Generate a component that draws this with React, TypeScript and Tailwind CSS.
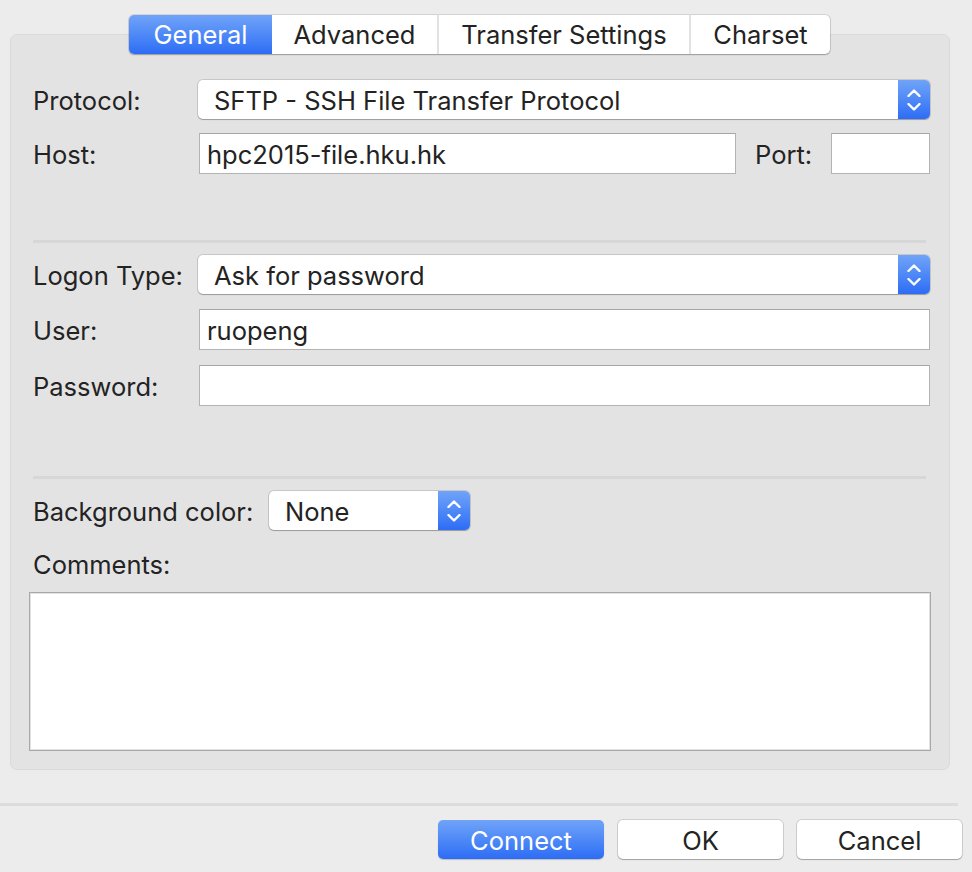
const font = { fontFamily: "Inter, 'Liberation Sans', sans-serif" };

const Stepper = () => (
  <div className="flex h-full w-[32px] flex-col items-center justify-center gap-[6px] rounded-r-[5px] bg-linear-to-b from-[#70a3f8] to-[#2d6cf5]">
    <svg width="14" height="8" viewBox="0 0 14 8" fill="none">
      <path d="M1.5 7 L7 1.5 L12.5 7" stroke="white" strokeWidth="2.4" strokeLinecap="round" strokeLinejoin="round" />
    </svg>
    <svg width="14" height="8" viewBox="0 0 14 8" fill="none">
      <path d="M1.5 1 L7 6.5 L12.5 1" stroke="white" strokeWidth="2.4" strokeLinecap="round" strokeLinejoin="round" />
    </svg>
  </div>
);

const Select = ({ value, className }: { value: string; className: string }) => (
  <div
    className={`flex h-[39px] items-stretch rounded-[5px] bg-white shadow-[0_0_0_1px_rgba(0,0,0,0.12),0_1px_1px_rgba(0,0,0,0.22)] ${className}`}
  >
    <div className="flex flex-1 items-center pt-[3px] pl-[16px] text-[25.5px] text-[#232323]">{value}</div>
    <Stepper />
  </div>
);

const Input = ({ value, className }: { value?: string; className: string }) => (
  <div
    className={`flex h-[41px] items-center border border-[#b3b3b3] border-t-[#a6a6a6] bg-white pt-[3px] pl-[7px] text-[25.5px] text-[#232323] ${className}`}
  >
    {value}
  </div>
);

const Label = ({ children, className = "w-[165px]" }: { children: string; className?: string }) => (
  <div className={`shrink-0 pt-[3px] text-[25.5px] leading-[32px] text-[#232323] ${className}`}>{children}</div>
);

const Separator = () => <div className="mr-[4px] h-[3px] bg-[#d7d7d7]" />;

export default function App() {
  const tabs = [
    { name: "General", w: "w-[143px]" },
    { name: "Advanced", w: "w-[165px]" },
    { name: "Transfer Settings", w: "w-[252px]" },
    { name: "Charset", w: "w-[141px]" },
  ];

  return (
    <div className="flex h-[872px] w-[972px] flex-col overflow-hidden bg-[#ececec]" style={font}>
      {/* tabs */}
      <div className="relative z-10 mt-[15px] ml-[129px] flex h-[39px] w-[701px] rounded-[5px] bg-white shadow-[0_0_0_1px_rgba(0,0,0,0.1),0_1px_1.5px_rgba(0,0,0,0.25)]">
        {tabs.map((t, i) => (
          <div
            key={t.name}
            className={`flex items-center justify-center pt-[2px] text-[25.5px] ${t.w} ${
              i === 0
                ? "rounded-l-[5px] bg-linear-to-b from-[#70a3f8] to-[#2d6cf5] text-white"
                : "text-[#232323]"
            } ${i > 1 ? "border-l-2 border-[#e2e2e2]" : ""}`}
          >
            {t.name}
          </div>
        ))}
      </div>

      {/* panel */}
      <div className="mx-[10px] -mt-[20px] flex h-[736px] w-[940px] flex-col rounded-[7px] border border-[#dadada] bg-[#e3e3e3] pt-[45px] pr-[19px] pl-[22px]">
        <div className="flex items-center">
          <Label>Protocol:</Label>
          <Select value="SFTP - SSH File Transfer Protocol" className="w-[732px]" />
        </div>
        <div className="mt-[14px] flex items-center">
          <Label>Host:</Label>
          <Input value="hpc2015-file.hku.hk" className="ml-[1px] w-[537px]" />
          <Label className="ml-[19px] w-[76px]">Port:</Label>
          <Input className="w-[99px]" />
        </div>

        <div className="mt-[66px]">
          <Separator />
        </div>

        <div className="mt-[12px] flex items-center">
          <Label>Logon Type:</Label>
          <Select value="Ask for password" className="w-[732px]" />
        </div>
        <div className="mt-[15px] flex items-center">
          <Label>User:</Label>
          <Input value="ruopeng" className="ml-[1px] w-[731px]" />
        </div>
        <div className="mt-[15px] flex items-center">
          <Label>Password:</Label>
          <Input className="ml-[1px] w-[731px]" />
        </div>

        <div className="mt-[70px]">
          <Separator />
        </div>

        <div className="mt-[12px] flex items-center">
          <Label className="w-[236px]">Background color:</Label>
          <Select value="None" className="w-[201px]" />
        </div>
        <div className="mt-[16px] h-[30px]">
          <Label>Comments:</Label>
        </div>
        <div className="mt-[16px] -ml-[4px] h-[159px] w-[902px] border border-[#a8a8a8] bg-white shadow-[inset_0_0_0_1px_#e2e2e2]" />
      </div>

      {/* bottom */}
      <div className="mt-[33px] h-[3px] w-[958px] bg-[#dcdcdc]" />
      <div className="mt-[14px] flex justify-end gap-[14px] pr-[10px]">
        <button className="h-[39px] w-[166px] rounded-[5px] bg-linear-to-b from-[#70a3f8] to-[#2d6cf5] pt-[2px] text-[25.5px] text-white shadow-[0_1px_1px_rgba(0,0,0,0.2)]">
          Connect
        </button>
        <button className="h-[39px] w-[165px] rounded-[5px] bg-white pt-[2px] text-[25.5px] text-[#232323] shadow-[0_0_0_1px_rgba(0,0,0,0.12),0_1px_1px_rgba(0,0,0,0.22)]">
          OK
        </button>
        <button className="h-[39px] w-[165px] rounded-[5px] bg-white pt-[2px] text-[25.5px] text-[#232323] shadow-[0_0_0_1px_rgba(0,0,0,0.12),0_1px_1px_rgba(0,0,0,0.22)]">
          Cancel
        </button>
      </div>
    </div>
  );
}
